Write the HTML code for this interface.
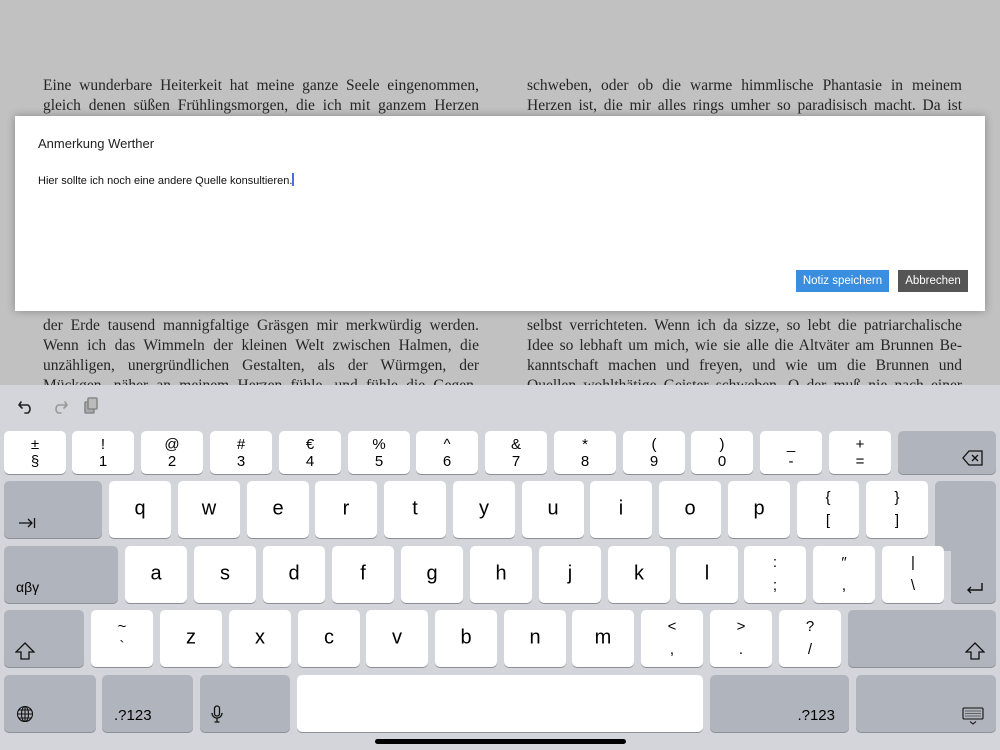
<!DOCTYPE html>
<html><head><meta charset="utf-8"><style>
*{margin:0;padding:0;box-sizing:border-box}
body{width:1000px;height:750px;overflow:hidden;background:#c1c1c1;position:relative;font-family:"Liberation Sans",sans-serif}
.ln{position:absolute;height:20px;font-family:"Liberation Serif",serif;font-size:15.5px;color:#262626;text-align:justify;text-align-last:justify;white-space:nowrap;line-height:20px}
.l{left:43px;width:436px}.r{left:527px;width:435px}
.dlg{position:absolute;left:15px;top:116px;width:970px;height:195px;background:#fff;box-shadow:0 0 8px rgba(0,0,0,.3)}
.kb{position:absolute;left:0;top:385px;width:1000px;height:365px;background:#d3d5da}
.k{position:absolute;background:#fff;border-radius:5px;box-shadow:0 1px 0 #8d9096;color:#000;text-align:center;font-size:20px}
.s{background:#b0b4bc}
.k .c{position:absolute;left:0;right:0;top:50%;transform:translateY(-55%)}
.k .t{position:absolute;left:0;right:0;font-size:15px}
.k .bl{position:absolute;left:12px;bottom:8px;font-size:15px}
.k .br{position:absolute;right:14px;bottom:8px;font-size:15px}
</style></head><body>
<div class="ln l" style="top:76px">Eine wunderbare Heiterkeit hat meine ganze Seele eingenommen,</div>
<div class="ln l" style="top:96px">gleich denen süßen Frühlingsmorgen, die ich mit ganzem Herzen</div>
<div class="ln r" style="top:76px">schweben, oder ob die warme himmlische Phantasie in meinem</div>
<div class="ln r" style="top:96px">Herzen ist, die mir alles rings umher so paradisisch macht. Da ist</div>
<div class="ln l" style="top:316px">der Erde tausend mannigfaltige Gräsgen mir merkwürdig werden.</div>
<div class="ln l" style="top:336px">Wenn ich das Wimmeln der kleinen Welt zwischen Halmen, die</div>
<div class="ln l" style="top:356px">unzähligen, unergründlichen Gestalten, als der Würmgen, der</div>
<div class="ln l" style="top:376px">Mückgen, näher an meinem Herzen fühle, und fühle die Gegen-</div>
<div class="ln r" style="top:316px">selbst verrichteten. Wenn ich da sizze, so lebt die patriarchalische</div>
<div class="ln r" style="top:336px">Idee so lebhaft um mich, wie sie alle die Altväter am Brunnen Be-</div>
<div class="ln r" style="top:356px">kanntschaft machen und freyen, und wie um die Brunnen und</div>
<div class="ln r" style="top:376px">Quellen wohlthätige Geister schweben. O der muß nie nach einer</div>
<div class="dlg">
<div style="position:absolute;left:23px;top:20px;font-size:13px;color:#222">Anmerkung Werther</div>
<div style="position:absolute;left:23px;top:57px;font-size:11px;color:#111">Hier sollte ich noch eine andere Quelle konsultieren.<span style="display:inline-block;width:2px;height:13px;background:#4a6fe0;vertical-align:-2px"></span></div>
<div style="position:absolute;left:781px;top:154px;width:93px;height:22px;background:#3a8ee0;color:#fff;font-size:11.5px;line-height:22px;text-align:center">Notiz speichern</div>
<div style="position:absolute;left:883px;top:154px;width:70px;height:22px;background:#555;color:#fff;font-size:11.5px;line-height:22px;text-align:center">Abbrechen</div>
</div>
<div class="kb"></div>
<svg style="position:absolute;left:16px;top:396px" width="90" height="22" viewBox="0 0 90 22" fill="none" stroke-width="1.6" stroke-linecap="round" stroke-linejoin="round">
<path d="M4 6 L2 9 L5 12 M2 9 H11 A5 5 0 0 1 11 17 H8" stroke="#222" transform="translate(1,0)"/>
<path d="M50 6 L52 9 L49 12 M52 9 H43 A5 5 0 0 0 43 17 H46" stroke="#999" transform="translate(-1,0)"/>
<rect x="69" y="6" width="9" height="11" rx="1" stroke="#888" fill="#aaa"/><rect x="72" y="2" width="9" height="11" rx="1" stroke="#888" fill="#bbb"/>
</svg>
<!-- row1 -->
<div class="k" style="left:4px;top:431px;width:62px;height:43px"><div class="t" style="top:5px">±</div><div class="t" style="top:22px">§</div></div>
<div class="k" style="left:72px;top:431px;width:62px;height:43px"><div class="t" style="top:5px">!</div><div class="t" style="top:22px">1</div></div>
<div class="k" style="left:141px;top:431px;width:62px;height:43px"><div class="t" style="top:5px">@</div><div class="t" style="top:22px">2</div></div>
<div class="k" style="left:210px;top:431px;width:62px;height:43px"><div class="t" style="top:5px">#</div><div class="t" style="top:22px">3</div></div>
<div class="k" style="left:279px;top:431px;width:62px;height:43px"><div class="t" style="top:5px">€</div><div class="t" style="top:22px">4</div></div>
<div class="k" style="left:348px;top:431px;width:62px;height:43px"><div class="t" style="top:5px">%</div><div class="t" style="top:22px">5</div></div>
<div class="k" style="left:416px;top:431px;width:62px;height:43px"><div class="t" style="top:5px">^</div><div class="t" style="top:22px">6</div></div>
<div class="k" style="left:485px;top:431px;width:62px;height:43px"><div class="t" style="top:5px">&amp;</div><div class="t" style="top:22px">7</div></div>
<div class="k" style="left:554px;top:431px;width:62px;height:43px"><div class="t" style="top:5px">*</div><div class="t" style="top:22px">8</div></div>
<div class="k" style="left:623px;top:431px;width:62px;height:43px"><div class="t" style="top:5px">(</div><div class="t" style="top:22px">9</div></div>
<div class="k" style="left:691px;top:431px;width:62px;height:43px"><div class="t" style="top:5px">)</div><div class="t" style="top:22px">0</div></div>
<div class="k" style="left:760px;top:431px;width:62px;height:43px"><div class="t" style="top:5px">_</div><div class="t" style="top:22px">-</div></div>
<div class="k" style="left:829px;top:431px;width:62px;height:43px"><div class="t" style="top:5px">+</div><div class="t" style="top:22px">=</div></div>
<div class="k s" style="left:898px;top:431px;width:98px;height:43px"><svg style="position:absolute;right:12px;bottom:8px" width="22" height="16" viewBox="0 0 22 16" fill="none" stroke="#111" stroke-width="1.3"><path d="M7 1 H20 V15 H7 L1 8 Z M10 5 L16 11 M16 5 L10 11"/></svg></div>
<!-- row2 -->
<div class="k s" style="left:4px;top:481px;width:98px;height:57px"><svg style="position:absolute;left:14px;bottom:9px" width="18" height="12" viewBox="0 0 18 12" fill="none" stroke="#111" stroke-width="1.3"><path d="M1 6 H14 M10 2 L14 6 L10 10 M16.5 1 V11"/></svg></div>
<div class="k" style="left:109px;top:481px;width:62px;height:57px"><div class="c">q</div></div>
<div class="k" style="left:178px;top:481px;width:62px;height:57px"><div class="c">w</div></div>
<div class="k" style="left:247px;top:481px;width:62px;height:57px"><div class="c">e</div></div>
<div class="k" style="left:315px;top:481px;width:62px;height:57px"><div class="c">r</div></div>
<div class="k" style="left:384px;top:481px;width:62px;height:57px"><div class="c">t</div></div>
<div class="k" style="left:453px;top:481px;width:62px;height:57px"><div class="c">y</div></div>
<div class="k" style="left:522px;top:481px;width:62px;height:57px"><div class="c">u</div></div>
<div class="k" style="left:590px;top:481px;width:62px;height:57px"><div class="c">i</div></div>
<div class="k" style="left:659px;top:481px;width:62px;height:57px"><div class="c">o</div></div>
<div class="k" style="left:728px;top:481px;width:62px;height:57px"><div class="c">p</div></div>
<div class="k" style="left:797px;top:481px;width:62px;height:57px"><div class="t" style="top:8px">{</div><div class="t" style="top:31px">[</div></div>
<div class="k" style="left:866px;top:481px;width:62px;height:57px"><div class="t" style="top:8px">}</div><div class="t" style="top:31px">]</div></div>
<div class="k s" style="left:935px;top:481px;width:61px;height:70px;border-radius:5px 5px 0 5px;box-shadow:none"></div>
<div class="k s" style="left:951px;top:500px;width:45px;height:103px;border-radius:0 0 5px 5px"><svg style="position:absolute;right:11px;bottom:7px" width="20" height="14" viewBox="0 0 20 14" fill="none" stroke="#111" stroke-width="1.4"><path d="M17 1 V8 H3 M6 5 L3 8 L6 11"/></svg></div>
<!-- row3 -->
<div class="k s" style="left:4px;top:546px;width:114px;height:57px"><div class="bl" style="font-size:14px">αβγ</div></div>
<div class="k" style="left:125px;top:546px;width:62px;height:57px"><div class="c">a</div></div>
<div class="k" style="left:194px;top:546px;width:62px;height:57px"><div class="c">s</div></div>
<div class="k" style="left:263px;top:546px;width:62px;height:57px"><div class="c">d</div></div>
<div class="k" style="left:332px;top:546px;width:62px;height:57px"><div class="c">f</div></div>
<div class="k" style="left:401px;top:546px;width:62px;height:57px"><div class="c">g</div></div>
<div class="k" style="left:470px;top:546px;width:62px;height:57px"><div class="c">h</div></div>
<div class="k" style="left:539px;top:546px;width:62px;height:57px"><div class="c">j</div></div>
<div class="k" style="left:608px;top:546px;width:62px;height:57px"><div class="c">k</div></div>
<div class="k" style="left:676px;top:546px;width:62px;height:57px"><div class="c">l</div></div>
<div class="k" style="left:744px;top:546px;width:62px;height:57px"><div class="t" style="top:8px">:</div><div class="t" style="top:31px">;</div></div>
<div class="k" style="left:813px;top:546px;width:62px;height:57px"><div class="t" style="top:8px">″</div><div class="t" style="top:31px">,</div></div>
<div class="k" style="left:882px;top:546px;width:62px;height:57px"><div class="t" style="top:8px">|</div><div class="t" style="top:31px">\</div></div>
<!-- row4 -->
<div class="k s" style="left:4px;top:610px;width:80px;height:57px"><svg style="position:absolute;left:11px;bottom:7px" width="20" height="18" viewBox="0 0 20 18" fill="none" stroke="#111" stroke-width="1.3"><path d="M10 1 L19 10 H14 V17 H6 V10 H1 Z"/></svg></div>
<div class="k" style="left:91px;top:610px;width:62px;height:57px"><div class="t" style="top:8px">~</div><div class="t" style="top:28px">`</div></div>
<div class="k" style="left:160px;top:610px;width:62px;height:57px"><div class="c">z</div></div>
<div class="k" style="left:229px;top:610px;width:62px;height:57px"><div class="c">x</div></div>
<div class="k" style="left:298px;top:610px;width:62px;height:57px"><div class="c">c</div></div>
<div class="k" style="left:366px;top:610px;width:62px;height:57px"><div class="c">v</div></div>
<div class="k" style="left:435px;top:610px;width:62px;height:57px"><div class="c">b</div></div>
<div class="k" style="left:504px;top:610px;width:62px;height:57px"><div class="c">n</div></div>
<div class="k" style="left:572px;top:610px;width:62px;height:57px"><div class="c">m</div></div>
<div class="k" style="left:641px;top:610px;width:62px;height:57px"><div class="t" style="top:8px">&lt;</div><div class="t" style="top:31px">,</div></div>
<div class="k" style="left:710px;top:610px;width:62px;height:57px"><div class="t" style="top:8px">&gt;</div><div class="t" style="top:31px">.</div></div>
<div class="k" style="left:779px;top:610px;width:62px;height:57px"><div class="t" style="top:8px">?</div><div class="t" style="top:31px">/</div></div>
<div class="k s" style="left:848px;top:610px;width:148px;height:57px"><svg style="position:absolute;right:11px;bottom:7px" width="20" height="18" viewBox="0 0 20 18" fill="none" stroke="#111" stroke-width="1.3"><path d="M10 1 L19 10 H14 V17 H6 V10 H1 Z"/></svg></div>
<!-- row5 -->
<div class="k s" style="left:4px;top:675px;width:92px;height:57px"><svg style="position:absolute;left:12px;bottom:9px" width="18" height="18" viewBox="0 0 18 18" fill="none" stroke="#111" stroke-width="1.1"><circle cx="9" cy="9" r="7.5"/><ellipse cx="9" cy="9" rx="3.5" ry="7.5"/><path d="M9 1.5 V16.5 M1.5 9 H16.5 M2.8 5 H15.2 M2.8 13 H15.2"/></svg></div>
<div class="k s" style="left:102px;top:675px;width:91px;height:57px"><div class="bl">.?123</div></div>
<div class="k s" style="left:200px;top:675px;width:90px;height:57px"><svg style="position:absolute;left:11px;bottom:9px" width="12" height="18" viewBox="0 0 12 18" fill="none" stroke="#111" stroke-width="1.3"><rect x="3.5" y="1" width="5" height="10" rx="2.5"/><path d="M1 8 A5 5 0 0 0 11 8 M6 13 V17 M3.5 17 H8.5"/></svg></div>
<div class="k" style="left:297px;top:675px;width:406px;height:57px"></div>
<div class="k s" style="left:710px;top:675px;width:139px;height:57px"><div class="br">.?123</div></div>
<div class="k s" style="left:856px;top:675px;width:140px;height:57px"><svg style="position:absolute;right:12px;bottom:7px" width="22" height="18" viewBox="0 0 22 18" fill="none" stroke="#111" stroke-width="1.1"><rect x="1" y="1" width="20" height="11" rx="1"/><path d="M3.5 4 H18.5 M3.5 6.5 H18.5 M3.5 9 H18.5" stroke-dasharray="1 1"/><path d="M8 14.5 L11 17 L14 14.5"/></svg></div>
<div style="position:absolute;left:375px;top:739px;width:251px;height:5px;border-radius:3px;background:#000"></div>
</body></html>
